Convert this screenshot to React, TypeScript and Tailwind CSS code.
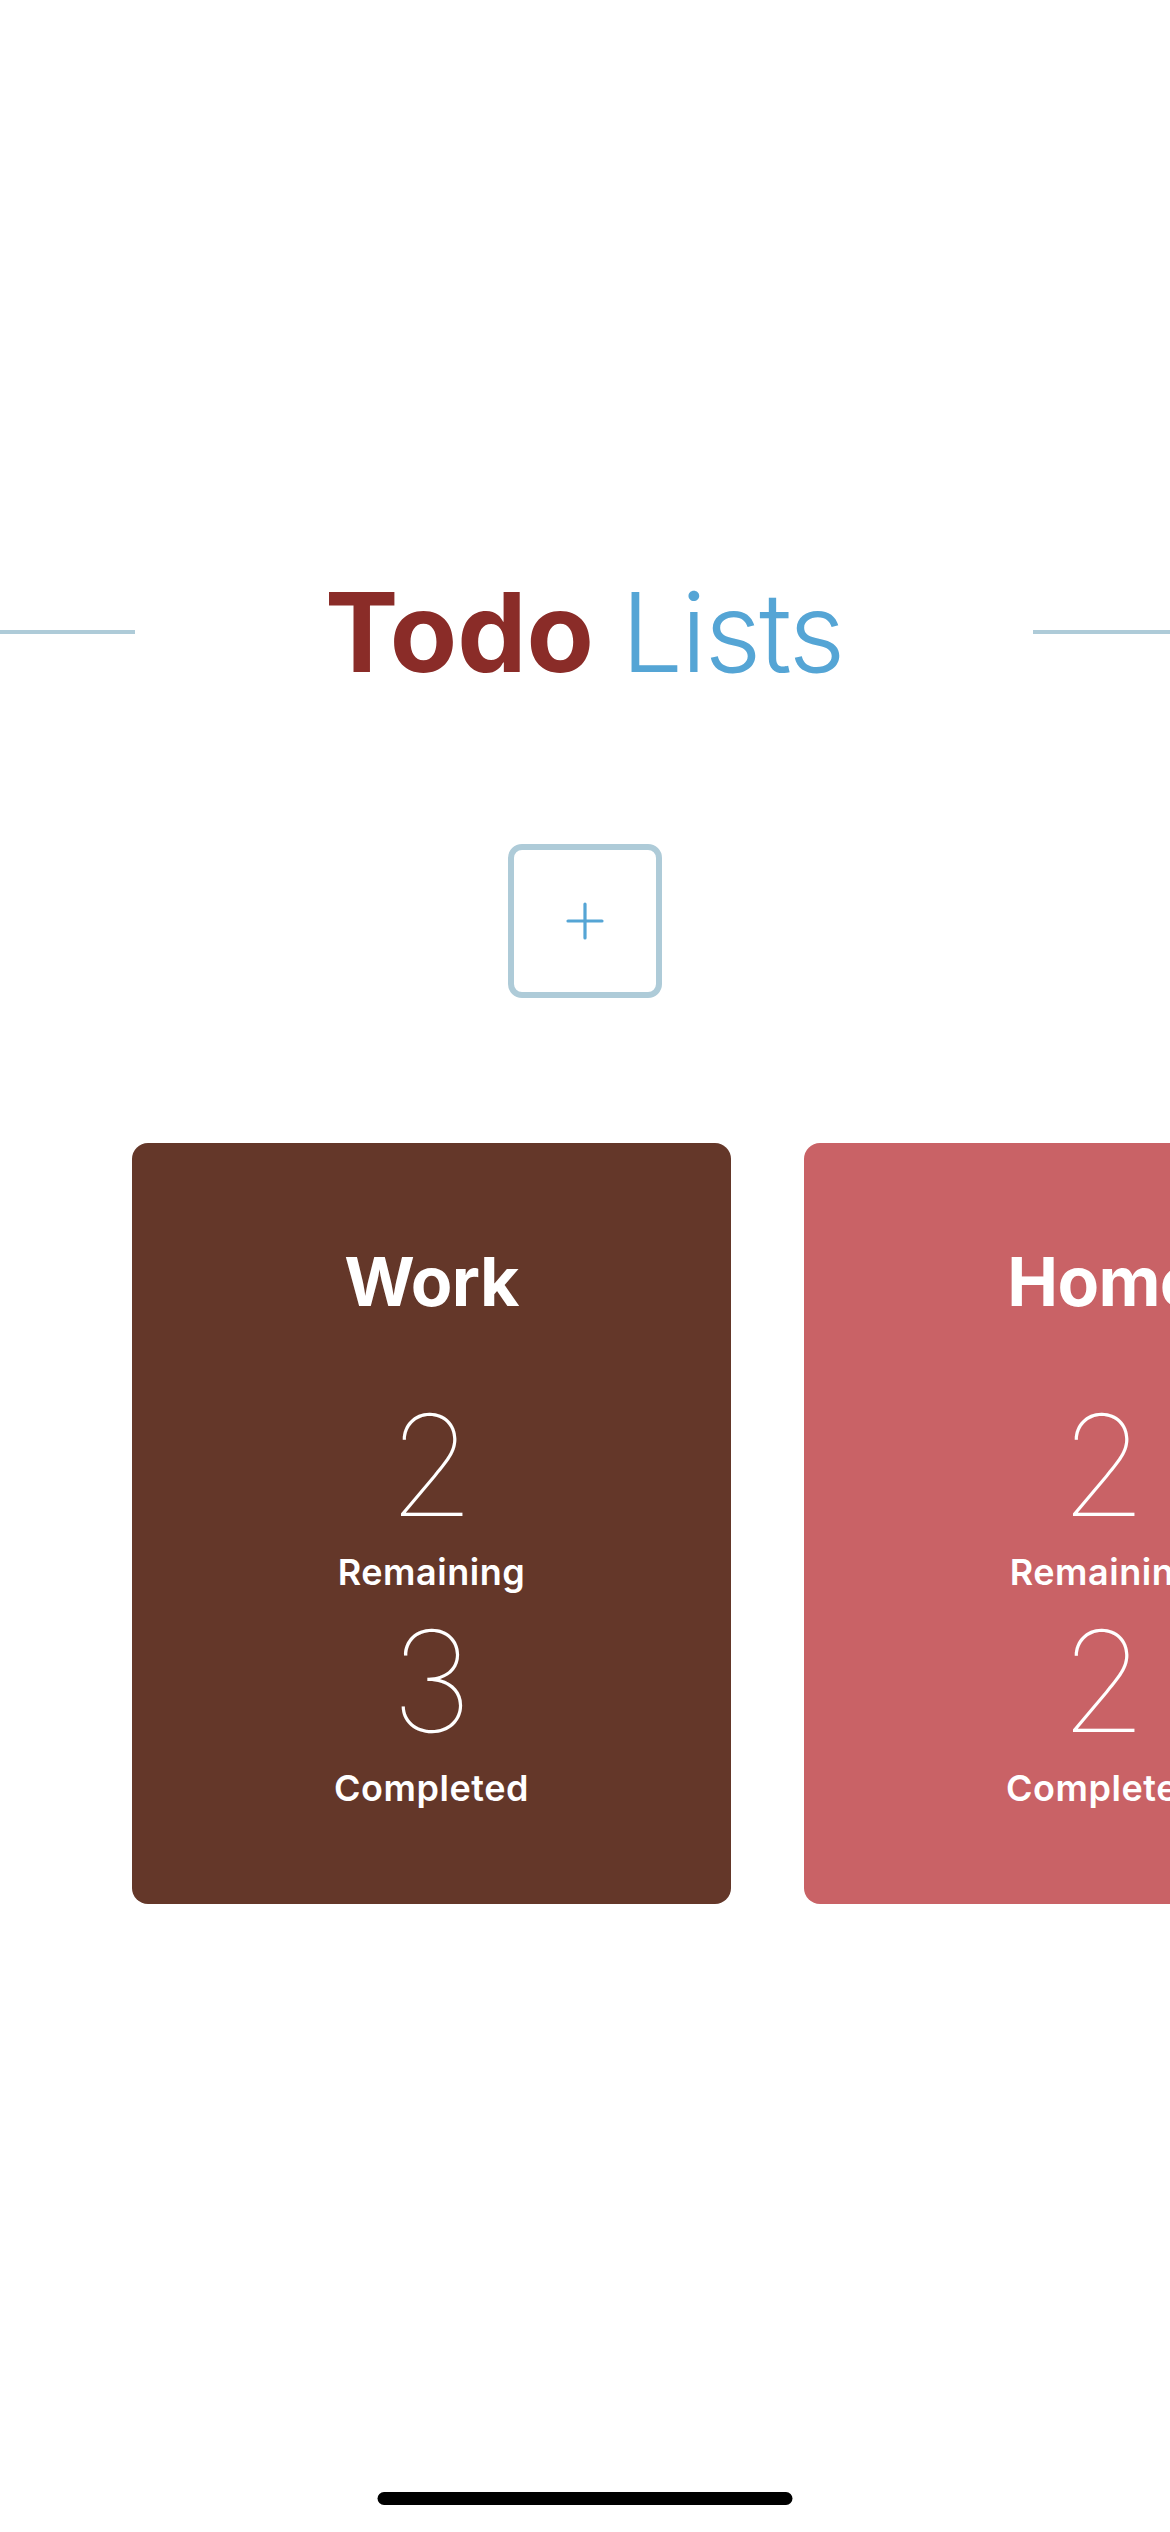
import React from "react";

type TodoList = { name: string; remaining: number; completed: number; color: string };

const lists: TodoList[] = [
  { name: "Work", remaining: 2, completed: 3, color: "bg-[#643729]" },
  { name: "Home", remaining: 2, completed: 2, color: "bg-[#c96266]" },
];

function ListCard({ list }: { list: TodoList }) {
  return (
    <div className={`flex h-[761px] w-[599px] shrink-0 flex-col items-center rounded-[16px] pt-[104px] text-white ${list.color}`}>
      <h2 className="text-[68px] font-bold leading-none tracking-[-0.01em]">{list.name}</h2>
      <span className="mt-[80px] text-[140px] font-thin leading-none">{list.remaining}</span>
      <span className="mt-[19px] text-[36px] font-semibold leading-none tracking-[0.015em]">Remaining</span>
      <span className="mt-[21px] text-[140px] font-thin leading-none">{list.completed}</span>
      <span className="mt-[19px] text-[36px] font-semibold leading-none tracking-[0.015em]">Completed</span>
    </div>
  );
}

export default function App() {
  return (
    <div
      className="relative flex h-[2532px] w-[1170px] flex-col overflow-hidden bg-white"
      style={{ fontFamily: "Inter, 'Liberation Sans', sans-serif" }}
    >
      {/* title with side rules */}
      <div className="mt-[577px] flex items-center">
        <div className="h-[4px] w-[135px] bg-[#aecbd8]" />
        <h1 className="flex flex-1 justify-center gap-[27px] text-[110px] leading-none">
          <span className="font-bold text-[#8a2c28]">Todo</span>
          <span className="font-light tracking-[-0.02em] text-[#55a5d5]">Lists</span>
        </h1>
        <div className="h-[4px] w-[137px] bg-[#aecbd8]" />
      </div>

      {/* add list */}
      <div className="mt-[157px] flex justify-center">
        <button
          aria-label="Add list"
          className="flex h-[154px] w-[154px] items-center justify-center rounded-[14px] border-[6px] border-[#aecbd8] bg-white"
        >
          <svg width="38" height="38" viewBox="0 0 38 38" fill="none">
            <path d="M19 2v34M2 19h34" stroke="#55a5d5" strokeWidth="3.2" strokeLinecap="round" />
          </svg>
        </button>
      </div>

      {/* lists */}
      <div className="mt-[145px] flex gap-[73px] overflow-hidden pl-[132px]">
        {lists.map((l) => (
          <ListCard key={l.name} list={l} />
        ))}
      </div>

      {/* home indicator */}
      <div className="absolute bottom-[27px] left-1/2 h-[13px] w-[415px] -translate-x-1/2 rounded-full bg-black" />
    </div>
  );
}
